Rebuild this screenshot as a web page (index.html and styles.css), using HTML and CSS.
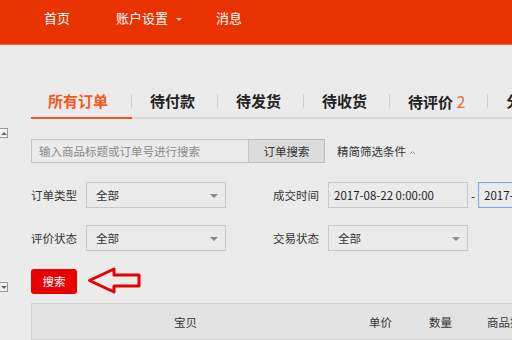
FILE: index.html
```html
<!DOCTYPE html>
<html lang="zh-CN">
<head>
<meta charset="utf-8">
<link rel="stylesheet" href="styles.css">
</head>
<body>
<header class="topbar">
  <nav class="nav">
    <a class="nav-item">首页</a>
    <a class="nav-item nav-drop">账户设置<span class="nav-caret"></span></a>
    <a class="nav-item">消息</a>
  </nav>
</header>

<span class="side-ctl side-up"><span class="tri-up"></span></span>
<span class="side-ctl side-down"><span class="tri-down"></span></span>

<main class="main">
  <div class="tabs">
    <div class="tab active">所有订单</div>
    <div class="tab">待付款</div>
    <div class="tab">待发货</div>
    <div class="tab">待收货</div>
    <div class="tab">待评价 <span class="count">2</span></div>
    <div class="tab last">分</div>
  </div>

  <div class="search-row">
    <div class="search-input">输入商品标题或订单号进行搜索</div>
    <div class="search-btn">订单搜索</div>
    <div class="filter-toggle">精简筛选条件<svg class="chev" width="7" height="5" viewBox="0 0 7 5"><path d="M1 4 L3.5 1.5 L6 4" fill="none" stroke="#999" stroke-width="1"/></svg></div>
  </div>

  <div class="form-row row1">
    <div class="field">
      <span class="label">订单类型</span>
      <div class="select">全部<span class="sel-arrow"></span></div>
    </div>
    <div class="field">
      <span class="label">成交时间</span>
      <div class="date">2017-08-22 0:00:00</div>
      <span class="dash">-</span>
      <div class="date focus">2017-08-29 0:00:00</div>
    </div>
  </div>

  <div class="form-row row2">
    <div class="field">
      <span class="label">评价状态</span>
      <div class="select">全部<span class="sel-arrow"></span></div>
    </div>
    <div class="field">
      <span class="label">交易状态</span>
      <div class="select">全部<span class="sel-arrow"></span></div>
    </div>
  </div>

  <div class="action-row">
    <div class="go-btn">搜索</div>
    <svg class="arrow" width="56" height="28" viewBox="0 0 56 28">
      <path d="M2.5 13.5 L27 2 L27 8 L52 8 L52 19 L27 19 L27 25 Z" fill="none" stroke="#e60000" stroke-width="3" stroke-linejoin="round"/>
    </svg>
  </div>

  <div class="thead">
    <span class="th th-item">宝贝</span>
    <span class="th th-price">单价</span>
    <span class="th th-qty">数量</span>
    <span class="th th-op">商品操作</span>
  </div>
</main>
</body>
</html>
```

FILE: styles.css
```css
* { box-sizing: border-box; }
html, body { margin: 0; padding: 0; }
body {
  width: 512px;
  height: 340px;
  overflow: hidden;
  background: #ebebeb;
  font-family: "Noto Sans CJK SC", "Microsoft YaHei", sans-serif;
  color: #333;
  position: relative;
}

.topbar {
  height: 45px;
  background: #e83200;
  border-bottom: 1px solid #f06a48;
}
.nav {
  display: flex;
  align-items: center;
  height: 36px;
  padding-left: 44px;
}
.nav-item {
  color: #fff;
  font-size: 13px;
  line-height: 36px;
  margin-right: 46px;
  display: flex;
  align-items: center;
}
.nav-drop { margin-right: 34px; }
.nav-caret {
  display: inline-block;
  width: 0; height: 0;
  border-left: 3px solid transparent;
  border-right: 3px solid transparent;
  border-top: 3px solid #fbd3c6;
  margin-left: 8px;
  margin-top: 2px;
}

.side-ctl {
  position: absolute;
  left: -4px;
  width: 12px;
  height: 10px;
  border: 1px solid #999;
  background: #f2f2f2;
  display: flex;
  align-items: center;
  justify-content: center;
  padding-left: 4px;
}
.side-up { top: 128px; }
.side-down { top: 282px; }
.tri-up {
  width: 0; height: 0;
  border-left: 3px solid transparent;
  border-right: 3px solid transparent;
  border-bottom: 3px solid #666;
}
.tri-down {
  width: 0; height: 0;
  border-left: 3px solid transparent;
  border-right: 3px solid transparent;
  border-top: 3px solid #666;
}

.main {
  padding-left: 31px;
}

.tabs {
  display: flex;
  margin-top: 40px;
  border-bottom: 2px solid #d9d9d9;
  height: 34px;
  white-space: nowrap;
}
.tab {
  position: relative;
  height: 34px;
  line-height: 32px;
  font-size: 15px;
  font-weight: bold;
  color: #222;
  padding: 0 23px 0 18px;
  flex: none;
}
.tab::after {
  content: "";
  position: absolute;
  right: 0;
  top: 9px;
  width: 1px;
  height: 14px;
  background: #cfcfcf;
}
.tab.last::after { display: none; }
.tab.active {
  color: #f25a1e;
  padding-left: 17px;
  padding-right: 24px;
  border-bottom: 2px solid #f25a1e;
}
.count {
  color: #f5663b;
  font-weight: normal;
  font-size: 16px;
}

.search-row {
  display: flex;
  align-items: center;
  margin-top: 20px;
  height: 24px;
}
.search-input {
  width: 218px;
  height: 24px;
  border: 1px solid #c6c6c6;
  font-size: 11.5px;
  line-height: 22px;
  color: #8a8a8a;
  padding-left: 7px;
}
.search-btn {
  width: 76px;
  height: 24px;
  border: 1px solid #bdbdbd;
  border-left: none;
  background: #dcdcdc;
  font-size: 11.5px;
  line-height: 22px;
  text-align: center;
  color: #333;
}
.filter-toggle {
  margin-left: 12px;
  font-size: 11.5px;
  color: #333;
  display: flex;
  align-items: center;
}
.chev { margin-left: 3px; margin-top: 2px; }

.form-row {
  display: flex;
  align-items: center;
  height: 26px;
}
.row1 { margin-top: 19px; }
.row2 { margin-top: 17px; }
.field {
  display: flex;
  align-items: center;
  white-space: nowrap;
}
.field + .field { margin-left: 47px; }
.label {
  font-size: 11.5px;
  color: #333;
  width: 55px;
}
.select {
  position: relative;
  width: 140px;
  height: 26px;
  border: 1px solid #c9c9c9;
  font-size: 11.5px;
  line-height: 24px;
  padding-left: 9px;
  color: #333;
}
.sel-arrow {
  position: absolute;
  right: 7px;
  top: 11px;
  width: 0; height: 0;
  border-left: 4px solid transparent;
  border-right: 4px solid transparent;
  border-top: 4px solid #888;
}
.date {
  width: 140px;
  height: 26px;
  border: 1px solid #c9c9c9;
  font-size: 11.5px;
  line-height: 24px;
  padding-left: 5px;
  color: #222;
}
.dash {
  width: 10px;
  text-align: center;
  font-size: 12px;
}
.date.focus {
  border-color: #7ea6d9;
  box-shadow: inset 0 0 1px #9dbce6;
}

.action-row {
  display: flex;
  align-items: center;
  margin-top: 16px;
  height: 28px;
}
.go-btn {
  width: 46px;
  height: 25px;
  background: #e90000;
  border-radius: 3px;
  color: #fff;
  font-size: 11.5px;
  line-height: 25px;
  text-align: center;
}
.arrow { margin-left: 10px; }

.thead {
  position: relative;
  margin-top: 8px;
  height: 37px;
  background: #e3e3e3;
  border: 1px solid #d2d2d2;
  border-right: none;
  display: flex;
  align-items: center;
  white-space: nowrap;
  font-size: 11.5px;
  color: #333;
}
.th-item { margin-left: 142px; }
.th-price { margin-left: 172px; }
.th-qty { margin-left: 37px; }
.th-op { margin-left: 35px; }
```
